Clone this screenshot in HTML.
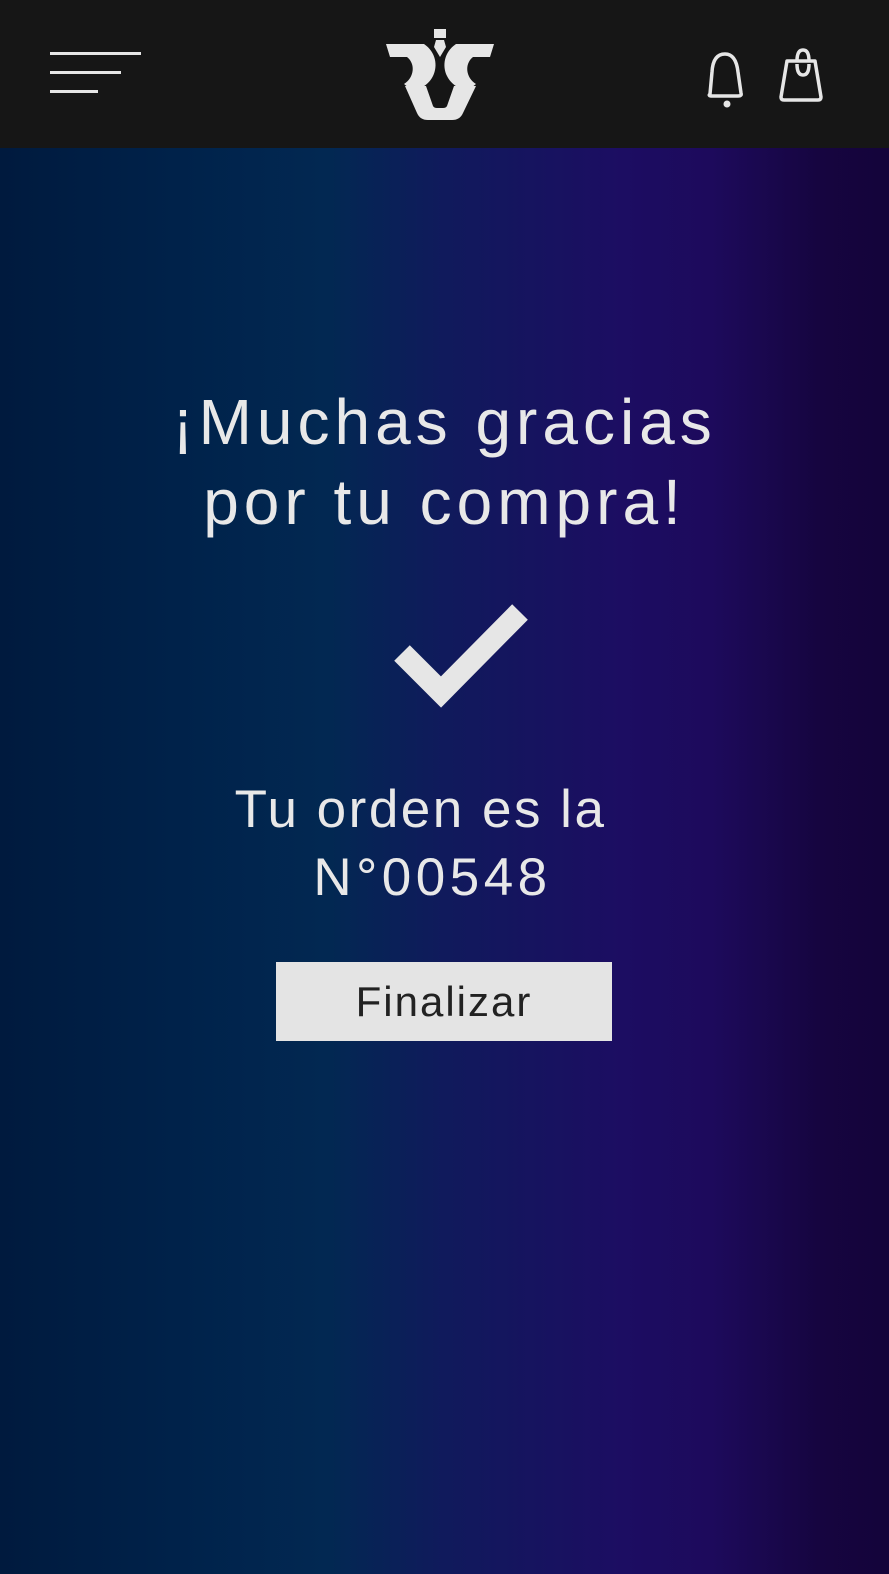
<!DOCTYPE html>
<html><head><meta charset="utf-8"><style>
html,body{margin:0;padding:0}
body{width:889px;height:1574px;position:relative;overflow:hidden;font-family:"Liberation Sans",sans-serif;
background:linear-gradient(90deg,#001a3e 0%,#00224a 20%,#022852 37%,#101a5c 50%,#1c0d62 70%,#1d0a5c 80%,#160540 92%,#14043a 100%);}
.hdr{position:absolute;left:0;top:0;width:889px;height:148px;background:#161616}
.t{position:absolute;left:0;width:889px;text-align:center;color:#e8e8e8}
.btn{position:absolute;left:276px;top:962px;width:336px;height:79px;background:#e4e4e4;color:#222;font-size:42px;text-align:center;line-height:79px;letter-spacing:2px}
</style></head><body>
<div class="hdr">
<svg width="889" height="148" viewBox="0 0 889 148" style="position:absolute;left:0;top:0">
<g fill="#e6e6e6">
<rect x="50" y="52" width="91" height="3"/>
<rect x="50" y="71" width="71" height="3"/>
<rect x="50" y="90" width="48" height="3"/>
<rect x="434" y="29" width="12" height="9"/>
<polygon points="436,40 444,40 446,47 440,57 434,47"/>
<path d="M386 44 H424 C436 52 438 66 433 76 C430 82 426 85 421 88 L409 88 L404 84 C414 78 416 64 407 57 L390 57 Z"/>
<path d="M494 44 H456 C444 52 442 66 447 76 C450 82 454 85 459 88 L471 88 L476 84 C466 78 464 64 473 57 L490 57 Z"/>
<path fill-rule="evenodd" d="M405 86 L476 86 L463 113 Q460 120 452 120 H428 Q420 120 417 113 Z M426 86 L454 86 L447 106 Q446 108 443 108 H437 Q434 108 433 106 Z"/>
</g>
<g fill="none" stroke="#e6e6e6" stroke-width="3.5" stroke-linejoin="round">
<path d="M710 94 Q708 96 712 96 H738 Q742 96 741 93 L738 72 Q736 54 725 54 Q713 54 712 72 Z"/>
<path d="M787 61 H815 L821 97 Q821 100 818 100 H784 Q781 100 781 97 Z"/>
<path d="M797 61 Q797 50 803 50 Q809 50 809 61"/>
<path d="M797 64 Q797 75 803 75 Q809 75 809 64"/>
</g>
<circle cx="727" cy="104" r="3.5" fill="#e6e6e6"/>
</svg>
</div>
<div class="t" style="top:382px;font-size:64px;line-height:80px;letter-spacing:5px">¡Muchas gracias<br>por tu compra!</div>
<svg width="889" height="1574" style="position:absolute;left:0;top:0">
<polyline points="402,653 441,692 520,612" fill="none" stroke="#e6e6e6" stroke-width="22"/>
</svg>
<div class="t" style="top:776px;font-size:53px;line-height:68px;letter-spacing:2.5px;left:-24px">Tu orden es la<br><span style="position:relative;left:12px;letter-spacing:4.5px">N°00548</span></div>
<div class="btn">Finalizar</div>
</body></html>
